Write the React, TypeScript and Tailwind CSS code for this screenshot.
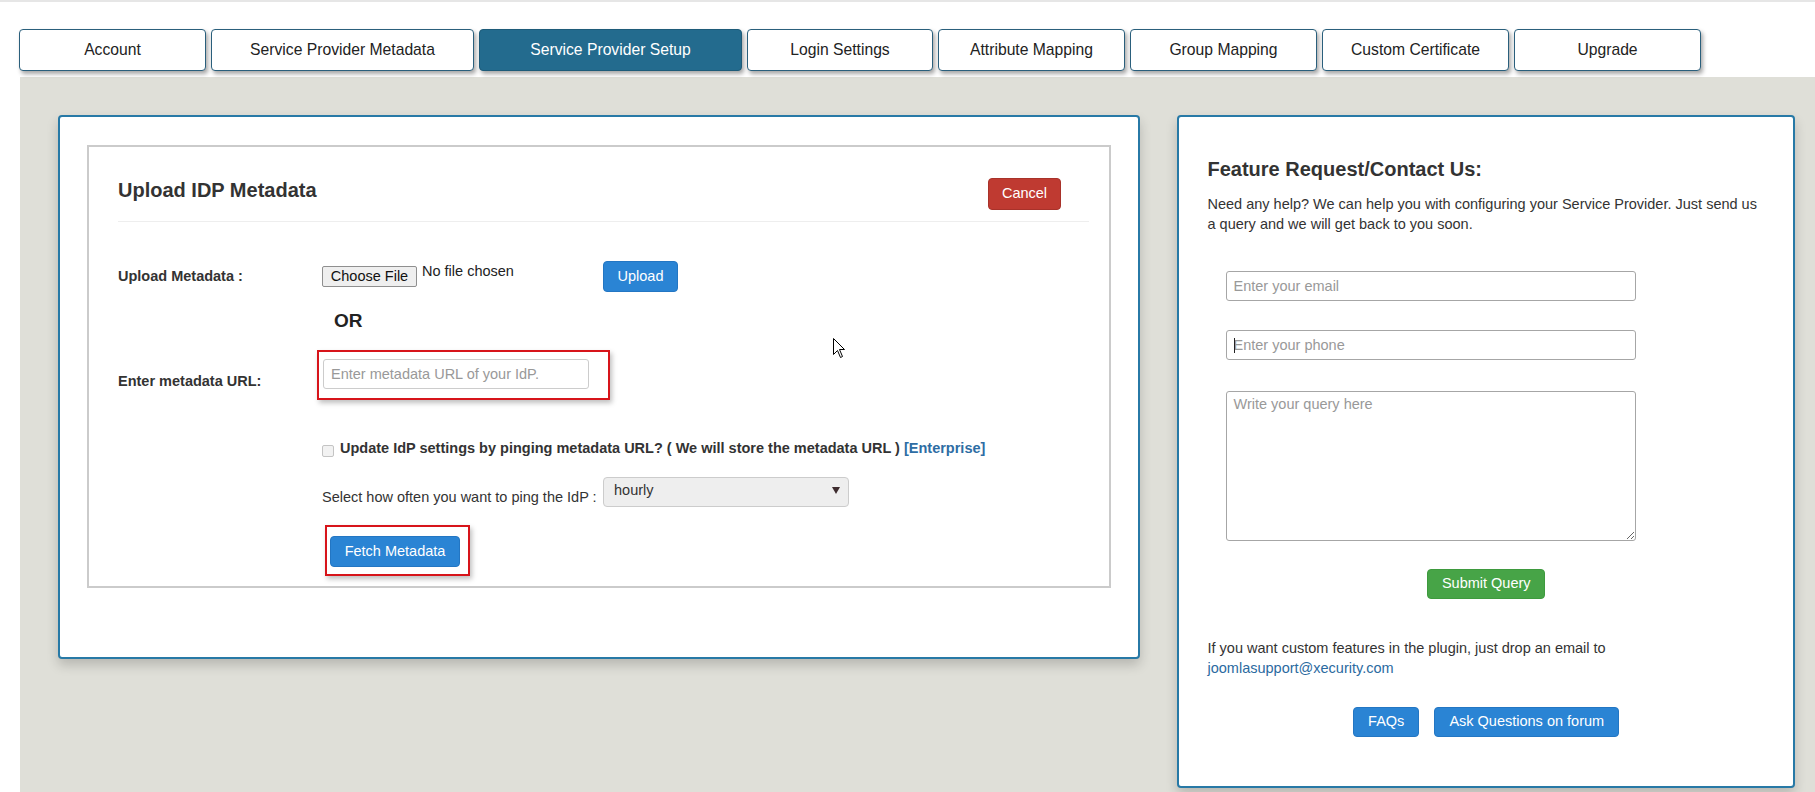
import React from 'react'

const tabs = [
  { label: 'Account', w: 'w-[187px]' },
  { label: 'Service Provider Metadata', w: 'w-[263px]' },
  { label: 'Service Provider Setup', w: 'w-[263px]', active: true },
  { label: 'Login Settings', w: 'w-[186px]' },
  { label: 'Attribute Mapping', w: 'w-[187px]' },
  { label: 'Group Mapping', w: 'w-[187px]' },
  { label: 'Custom Certificate', w: 'w-[187px]' },
  { label: 'Upgrade', w: 'w-[187px]' },
]

function Tab({ label, w, active }: { label: string; w: string; active?: boolean }) {
  return (
    <div
      className={`${w} h-[42px] flex items-center justify-center rounded-[4px] border text-[15.7px] shadow-[2px_3px_4px_rgba(0,0,0,0.35)] ${
        active ? 'bg-[#236b8e] border-[#1d5b79] text-white' : 'bg-white border-[#2a5f7c] text-[#222]'
      }`}
    >
      {label}
    </div>
  )
}

function BlueButton({ children, className = '' }: { children: React.ReactNode; className?: string }) {
  return (
    <button
      className={`flex items-center justify-center rounded-[4px] border border-[#2376c3] bg-[#2a84d4] text-[14.5px] text-white ${className}`}
    >
      {children}
    </button>
  )
}

function UploadPanel() {
  return (
    <div className="w-[1082px] shrink-0 rounded-[4px] border-2 border-[#2779a6] bg-white px-[27px] pt-[28px] pb-[69px] shadow-[0_6px_12px_rgba(0,0,0,0.18)]">
      <div className="border-2 border-[#cbcbcb] pl-[29px] pb-[10px]">
        {/* Header */}
        <div className="mr-[20px] flex items-start justify-between border-b border-[#eeeeee] pt-[31px] pb-[11px]">
          <h2 className="text-[20px] leading-[24px] font-bold text-[#333]">Upload IDP Metadata</h2>
          <button className="mr-[28px] flex h-[32px] w-[73px] items-center justify-center rounded-[4px] border border-[#a8322a] bg-[#bf3a31] text-[14.5px] text-white">
            Cancel
          </button>
        </div>

        {/* Upload file */}
        <div className="mt-[39px] flex h-[31px] items-center">
          <div className="w-[204px] shrink-0 text-[14.5px] font-bold text-[#333]">Upload Metadata :</div>
          <div className="flex w-[281px] shrink-0 items-start">
            <span className="flex h-[21px] w-[95px] items-center justify-center rounded-[2px] border border-[#8f8f8f] bg-[#efefef] text-[14.5px] text-[#111]">
              Choose File
            </span>
            <span className="ml-[5px] -mt-[3px] text-[14.5px] leading-[17px] text-[#222]">No file chosen</span>
          </div>
          <BlueButton className="h-[31px] w-[75px]">Upload</BlueButton>
        </div>

        <div className="mt-[18px] pl-[216px] text-[19px] leading-[22px] font-bold text-[#222]">OR</div>

        {/* Metadata URL */}
        <div className="mt-[18px] flex items-start">
          <div className="mt-[22.5px] w-[199px] shrink-0 text-[14.5px] leading-[17px] font-bold text-[#333]">
            Enter metadata URL:
          </div>
          <div className="border-2 border-[#d7141a] pt-[7px] pr-[19px] pb-[9px] pl-[4px] shadow-[2px_3px_5px_rgba(0,0,0,0.25)]">
            <input
              className="h-[30px] w-[266px] rounded-[3px] border border-[#cccccc] px-[7px] text-[14.5px] outline-none placeholder:text-[#999]"
              placeholder="Enter metadata URL of your IdP."
            />
          </div>
        </div>

        {/* Ping checkbox */}
        <div className="mt-[40px] ml-[204px] flex items-start">
          <span className="mt-[5px] h-[12px] w-[12px] shrink-0 rounded-[2px] border border-[#c4c4c4] bg-[#f2f2f2]" />
          <span className="ml-[6px] text-[14.5px] leading-[17px] font-bold text-[#333]">
            Update IdP settings by pinging metadata URL? ( We will store the metadata URL ){' '}
            <span className="text-[#2e6da4]">[Enterprise]</span>
          </span>
        </div>

        {/* Frequency */}
        <div className="mt-[20px] ml-[204px] flex items-end">
          <span className="mb-[1px] w-[281px] shrink-0 whitespace-nowrap text-[14.5px] leading-[17px] text-[#333]">
            Select how often you want to ping the IdP :
          </span>
          <div className="flex h-[30px] w-[246px] items-center justify-between rounded-[4px] border border-[#cccccc] bg-[#eeeeee] pr-[8px] pl-[10px] text-[14.5px] text-[#333]">
            <span className="-mt-[2px]">hourly</span>
            <svg width="8" height="7" viewBox="0 0 8 7" className="-mt-[3px]">
              <path d="M0 0 L8 0 L4 7 Z" fill="#3d2b2e" />
            </svg>
          </div>
        </div>

        {/* Fetch */}
        <div className="mt-[18px] ml-[206.5px] inline-block border-2 border-[#d7141a] pt-[9px] pr-[7.5px] pb-[7px] pl-[3.5px] shadow-[2px_3px_5px_rgba(0,0,0,0.25)]">
          <BlueButton className="h-[31px] w-[130px]">Fetch Metadata</BlueButton>
        </div>
      </div>
    </div>
  )
}

function ContactPanel() {
  return (
    <div className="w-[618px] shrink-0 rounded-[4px] border-2 border-[#2779a6] bg-white pt-[40px] pr-[28px] pb-[49px] pl-[28.5px] shadow-[0_6px_12px_rgba(0,0,0,0.18)]">
      <h3 className="text-[20px] leading-[24px] font-bold text-[#333]">Feature Request/Contact Us:</h3>
      <p className="mt-[13px] text-[14.5px] leading-[20px] text-[#333]">
        Need any help? We can help you with configuring your Service Provider. Just send us a query and we will get back
        to you soon.
      </p>

      <div className="ml-[18px]">
        <input
          className="mt-[37px] block h-[30px] w-[410px] rounded-[3px] border border-[#a6a6a6] px-[7px] text-[14.5px] outline-none placeholder:text-[#999]"
          placeholder="Enter your email"
        />
        <div className="relative mt-[29px]">
          <input
            className="block h-[30px] w-[410px] rounded-[3px] border border-[#a6a6a6] px-[7px] text-[14.5px] outline-none placeholder:text-[#999]"
            placeholder="Enter your phone"
          />
          <span className="absolute top-[8px] left-[8px] h-[15px] w-px bg-[#222]" />
        </div>
        <textarea
          className="mt-[31px] block h-[150px] w-[410px] rounded-[3px] border border-[#a6a6a6] px-[7px] pt-[4px] text-[14.5px] leading-[17px] outline-none placeholder:text-[#999]"
          placeholder="Write your query here"
        />
      </div>

      <div className="mt-[28px] flex justify-center">
        <button className="flex h-[30px] w-[118px] items-center justify-center rounded-[4px] border border-[#3e9a3e] bg-[#47a447] text-[14.5px] text-white">
          Submit Query
        </button>
      </div>

      <p className="mt-[39px] text-[14.5px] leading-[20px] text-[#333]">
        If you want custom features in the plugin, just drop an email to{' '}
        <a className="text-[#2b6aa0]">joomlasupport@xecurity.com</a>
      </p>

      <div className="mt-[29px] flex justify-center gap-[15px]">
        <BlueButton className="h-[30px] w-[66px]">FAQs</BlueButton>
        <BlueButton className="h-[30px] w-[185px]">Ask Questions on forum</BlueButton>
      </div>
    </div>
  )
}

export default function App() {
  return (
    <div className="relative h-[792px] w-[1815px] overflow-hidden border-t-2 border-[#e6e6e6] bg-white font-['Liberation_Sans',Arial,sans-serif]">
      <div className="flex gap-[5px] pt-[27px] pl-[19px]">
        {tabs.map((t) => (
          <Tab key={t.label} {...t} />
        ))}
      </div>

      <div className="mt-[6px] ml-[20px] flex h-[715px] items-start gap-[37px] bg-[#dfdfd8] pt-[38px] pr-[20px] pl-[38px]">
        <UploadPanel />
        <ContactPanel />
      </div>

      {/* mouse pointer */}
      <svg className="absolute top-[336px] left-[833px]" width="13" height="21" viewBox="0 0 13 21">
        <path d="M0.5 0.5 L0.5 16.5 L4.5 12.5 L7.5 19.5 L9.5 18.5 L6.5 11.5 L11.5 11.5 Z" fill="#fff" stroke="#000" strokeWidth="1" />
      </svg>
    </div>
  )
}
